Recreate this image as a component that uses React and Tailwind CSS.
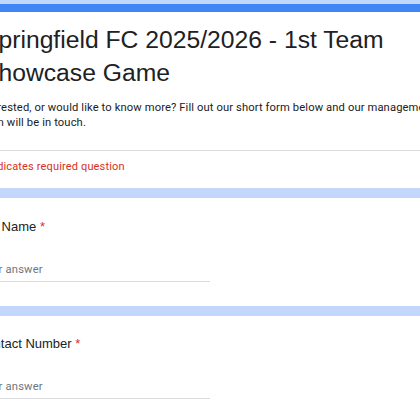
import React from 'react';

const Question = ({ label, top }) => (
    <div className={`bg-white pl-[17px] pr-5 pb-[24px] ${top}`}>
        <div className="text-[13px] leading-[18px] text-[#202124] font-['Liberation_Sans',Arial,sans-serif]">
            {label} <span className="text-[#d93025]">*</span>
        </div>
        <div className="mt-[26px] w-[233px] border-b border-[#dadce0] pb-[3px] pl-[2px] text-[11.2px] leading-[16px] tracking-[0.2px] text-[#70757a]">
            Your answer
        </div>
    </div>
);

const App = () => {
    return (
        <div className="w-[420px] h-[420px] overflow-hidden bg-[#c2d7fb] font-['Roboto',Arial,sans-serif]">
            <div className="-ml-[40px] w-[540px] pt-[4px] flex flex-col gap-[10px]">
                <div className="bg-white border-t-[8px] border-[#4285f4]">
                    <div className="px-5 pt-[11px]">
                        <h1 className="ml-[2px] w-[470px] text-[24.7px] leading-[33px] text-[#202124] font-['Liberation_Sans',Arial,sans-serif]">
                            Springfield FC 2025/2026 - 1st Team Showcase Game
                        </h1>
                        <p className="-ml-[2px] mt-[11px] w-[462px] text-[11.2px] leading-[15px] tracking-[0.12px] text-[#202124]">
                            Interested, or would like to know more? Fill out our short form below and our management team will be in touch.
                        </p>
                    </div>
                    <div className="mt-[20px] border-t border-[#dadce0]" />
                    <div className="px-5 pt-[8px] pb-[13px] text-[11px] leading-[16px] tracking-[0.15px] text-[#d93025]">
                        * Indicates required question
                    </div>
                </div>
                <Question label="Full Name" top="pt-[20px]" />
                <Question label="Contact Number" top="pt-[19px]" />
            </div>
        </div>
    );
};

export default App;
